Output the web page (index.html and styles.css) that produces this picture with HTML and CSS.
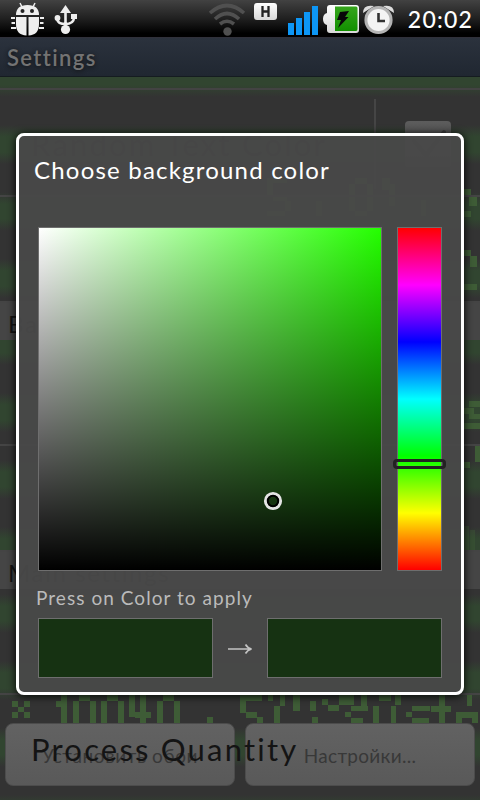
FILE: index.html
```html
<!DOCTYPE html>
<html lang="en">
<head>
<meta charset="utf-8">
<title>Settings</title>
<link rel="stylesheet" href="styles.css">
</head>
<body>
<div class="screen">
  <header class="status">
    <svg class="status-icons" width="400" height="37" viewBox="0 0 400 37">
      <defs>
        <linearGradient id="silver" x1="0" y1="0" x2="0" y2="1"><stop offset="0" stop-color="#fff"/><stop offset="1" stop-color="#d8d8d8"/></linearGradient>
        <linearGradient id="charge" x1="0" y1="0" x2="0" y2="1"><stop offset="0" stop-color="#36a51c"/><stop offset="1" stop-color="#129000"/></linearGradient>
      </defs>
      <g fill="#eee" stroke="#eee">
        <path stroke="none" d="M16 15Q16 5 27.500 5Q39 5 39 15ZM16 17H26.500V35.500Q16 35 16 24ZM28.500 17H39V24Q39 35 28.500 35.500Z"/>
        <path stroke-width="1.500" d="M20 3L22 7M35 3L33 7"/>
        <path stroke-width="2" d="M11 18H15M11.500 23H15M11 28H16M40 18H44M40 23H43.500M39 28H44"/>
        <circle cx="22.500" cy="11" r="2" fill="#222" stroke="none"/><circle cx="32" cy="11" r="2" fill="#222" stroke="none"/>
      </g>
      <g fill="#eee" stroke="#eee">
        <path stroke="none" d="M65.500 5L71 13H60ZM71 14H77V19H71Z"/><circle cx="57.500" cy="18" r="2.900" stroke="none"/><circle cx="65.500" cy="29.500" r="4.600" stroke="none"/>
        <path fill="none" stroke-width="2.600" d="M65.500 12V28M57.500 18V20Q58 24 65.500 24Q73.500 24 74 18"/>
      </g>
      <g fill="none" stroke="#505050" stroke-width="3.600">
        <path d="M210 13Q227 -2 244 13M215 19Q227 8 239 19M220 24Q227 18.500 234 24"/><circle cx="227.500" cy="31.500" r="4.200" fill="#505050" stroke="none"/>
      </g>
      <rect x="254" y="3" width="23" height="17" rx="3" fill="url(#silver)"/>
      <path fill="none" stroke="#222" stroke-width="2.300" d="M262.500 6V17M268.500 6V17M262.500 11.500H268.500"/>
      <g fill="#0d96f5"><path d="M288 23h6v12h-6zM296 18h6v17h-6zM304 12h6v23h-6zM312 6h6v29h-6z"/></g>
      <path fill="url(#silver)" d="M330 5H356Q359 5 359 8V30Q359 33 356 33H330Q327 33 327 30V25Q323 24 323 19Q323 14 327 13V8Q327 5 330 5Z"/>
      <path fill="url(#charge)" d="M335 6.500H356Q357.500 6.500 357.500 8V29Q357.500 31 356 31H335Z"/>
      <path fill="#080808" d="M340 12L349 11L345 17L348.500 17L338 28L341 20L337 20Z"/>
      <g fill="#ddd"><path d="M363 13Q363 4 374 6ZM394 13Q394 4 383 6Z"/></g>
      <circle cx="378.500" cy="20" r="12.600" fill="#f4f4f4" stroke="#b4b4b4" stroke-width="3"/>
      <path fill="none" stroke="#333" stroke-width="2.600" d="M378.500 13V21H385"/>
    </svg>
    <time class="clock">20:02</time>
  </header>
  <h1 class="titlebar"><span>Settings</span></h1>

  <main class="stage">
    <svg class="pixels" width="480" height="723" viewBox="0 77 480 723" shape-rendering="crispEdges" fill="#3e5c36">
      <path d="M12 701h6v6h-6zM24 701h6v6h-6zM18 707h6v5h-6zM12 712h6v6h-6zM24 712h6v6h-6z"/>
      <path d="M61 695h6v28h-6zM56 701h5v6h-5zM73 701h6v22h-6zM79 695h11v6h-11zM90 701h6v22h-6zM101 701h6v22h-6zM107 695h11v6h-11zM118 701h6v22h-6zM129 695h6v22h-6zM135 712h16v6h-16zM140 695h6v28h-6zM157 701h6v22h-6zM163 695h11v6h-11zM174 701h6v22h-6zM207 717h6v6h-6z"/>
      <path d="M240 695h22v6h-22zM240 701h6v12h-6zM246 712h11v6h-11zM257 717h6v6h-6zM268 695h5v6h-5zM280 695h5v11h-5zM274 706h6v17h-6zM293 695h7v16h-7zM310 701h6v10h-6zM312 717h6v6h-6zM322 699h6v6h-6zM328 705h11v6h-11zM339 695h15v10h-15zM361 695h6v11h-6zM351 706h17v5h-17zM345 712h6v5h-6zM351 718h12v5h-12zM373 706h6v17h-6zM379 695h12v6h-12zM391 706h5v17h-5zM395 695h6v10h-6zM412 706h18v5h-18zM406 712h6v5h-6zM412 718h17v5h-17zM439 695h6v28h-6zM431 706h20v6h-20zM467 695h5v11h-5zM456 712h22v6h-22zM456 718h6v5h-6zM472 718h6v5h-6z"/>
      <path d="M463 189h8v6h-8zM469 197h8v9h-8zM463 211h8v6h-8zM464 250h7v6h-7zM470 256h7v11h-7zM464 284h13v6h-13z"/>
      <path d="M469 401h11v6h-11zM464 408h10v6h-10zM469 414h11v5h-11zM464 423h16v6h-16zM475 446h5v16h-5zM464 462h6v6h-6z"/>
      <path opacity=".4" d="M464 526h5v25h-5zM470 530h5v21h-5z"/>
      <path d="M267 178h20v5h-20zM267 183h6v13h-6zM273 196h14v5h-14zM285 201h6v10h-6zM267 211h18v5h-18zM316 201h6v15h-6zM349 184h6v27h-6zM355 178h12v6h-12zM367 184h6v27h-6zM355 211h12v5h-12zM382 178h8v12h-8zM389 184h6v22h-6zM421 200h5v16h-5z"/>
    </svg>
    <div class="actions"><div class="button">Установить обои</div><div class="button">Настройки...</div></div>
    <div class="list">
      <div class="row"><span class="label">Random Text Color</span><span class="check"><svg width="46" height="46" viewBox="0 0 46 46"><path d="M9 20L21 34L39 11" fill="none" stroke="#3c3c3c" stroke-width="4" stroke-linecap="round"/></svg></span></div>
      <div class="row"></div>
      <div class="section">Ba</div>
      <div class="row"></div>
      <div class="row"></div>
      <div class="section">Main settings</div>
      <div class="row"></div>
      <div class="row"><span class="label">Process Quantity</span></div>
    </div>
  </main>

  <section class="dialog">
    <h2>Choose background color</h2>
    <div class="picker">
      <div class="shade"><svg class="ring" width="20" height="20" viewBox="0 0 20 20" fill="none"><circle cx="10" cy="10" r="7.500" stroke="#e4e4e4" stroke-width="3.200"/><circle cx="10" cy="10" r="5.200" stroke="#000" stroke-width="2"/></svg></div>
      <div class="hue"><div class="slider"></div></div>
    </div>
    <p>Press on Color to apply</p>
    <div class="previews"><div class="swatch"></div><svg width="26" height="14" viewBox="0 0 26 14" fill="none" stroke="#c4c4c4" stroke-width="1.600"><path d="M1 8H24M18.500 3.500Q20.500 7 24.500 8Q20.500 9 18.500 12.500"/></svg><div class="swatch"></div></div>
  </section>
</div>
</body>
</html>
```
FILE: styles.css
```css
* { box-sizing: border-box; }
body { margin: 0; background: #333; font-family: Lato, "Open Sans", sans-serif; }
.screen { position: relative; width: 480px; height: 800px; overflow: hidden; }
.status { height: 37px; display: flex; justify-content: space-between; background: linear-gradient(#424242, #202020 50%, #000 90%); }
.status-icons { flex: none; }
.clock { padding: 5px 7px 0 0; font: 500 23px/28px Lato, sans-serif; letter-spacing: 1.2px; color: #fff; white-space: nowrap; }
.titlebar { height: 40px; margin: 0; padding: 6px 7px; border-top: 1px solid #30303a; border-bottom: 1px solid #151c20; background: linear-gradient(#2b323d, #202731); color: #737373; font-size: 22px; font-weight: 600; line-height: 28px; letter-spacing: 1.4px; text-shadow: 0 1px 4px #111; }
.stage { position: relative; height: 723px; background: repeating-linear-gradient(#314530 0, #314530 8px, #333 20px, #333 48px, #314530 60px, #314530 67px); }
.pixels { position: absolute; inset: 0; }
.actions { position: absolute; left: 5px; right: 5px; top: 646px; display: grid; grid-template-columns: 1fr 1fr; gap: 10px; }
.button { height: 63px; border: 1px solid #4c4c4c; border-radius: 8px; background: linear-gradient(#626262, #595959); color: #383838; font-size: 19px; line-height: 64px; text-align: center; letter-spacing: .3px; white-space: nowrap; }
.button:first-child { letter-spacing: .6px; }
.list { position: relative; padding-top: 11px; }
.list::before { content: ""; display: block; height: 2px; margin-bottom: 1px; background: #434343; }
.row { height: 106px; padding: 2px 29px 0 31px; display: flex; align-items: center; justify-content: space-between; border-bottom: 2px solid #444; }
.row:last-child { border: 0; }
.section { height: 37px; padding-left: 8px; background: #454545; color: #141414; font-size: 24px; line-height: 41px; letter-spacing: 1.6px; }
.label { color: #141414; font-size: 31px; letter-spacing: 2.2px; white-space: nowrap; }
.check { width: 77px; height: 90px; display: flex; align-items: center; justify-content: flex-end; border-left: 2px solid #454545; }
.check svg { background: linear-gradient(#5c5c5c, #444); border-radius: 4px; }
.dialog { position: absolute; left: 16px; top: 133px; width: 448px; height: 562px; padding: 18px 19px 0; border: 3px solid #fff; border-radius: 8px; background: rgba(73, 73, 73, .95); box-shadow: 0 1px 9px #000; }
.dialog h2 { height: 73px; margin: 0 0 0 -4px; color: #fff; font-size: 24px; font-weight: 400; line-height: 31px; letter-spacing: 1.2px; white-space: nowrap; }
.picker { display: flex; justify-content: space-between; height: 344px; width: 404px; }
.shade, .hue { position: relative; border: 1px solid #6e6e6e; }
.shade { width: 344px; background: linear-gradient(to bottom, transparent, #000), linear-gradient(to right, #fff, #24ff00); }
.hue { width: 45px; background: linear-gradient(#f00, #f0f, #00f, #0ff, #0f0, #ff0, #f00); }
.ring { position: absolute; left: 224px; top: 263px; }
.slider { position: absolute; left: -5px; top: 231px; width: 53px; height: 10px; border: 3px solid #222; border-radius: 4px; }
.dialog p { height: 47px; margin: 0 0 0 -2px; color: #bbb; font-size: 19px; line-height: 53px; letter-spacing: 1.05px; white-space: nowrap; }
.previews { display: flex; align-items: center; justify-content: space-between; width: 404px; height: 60px; }
.swatch { width: 175px; height: 60px; border: 1px solid #6e6e6e; background: #163212; }
```
